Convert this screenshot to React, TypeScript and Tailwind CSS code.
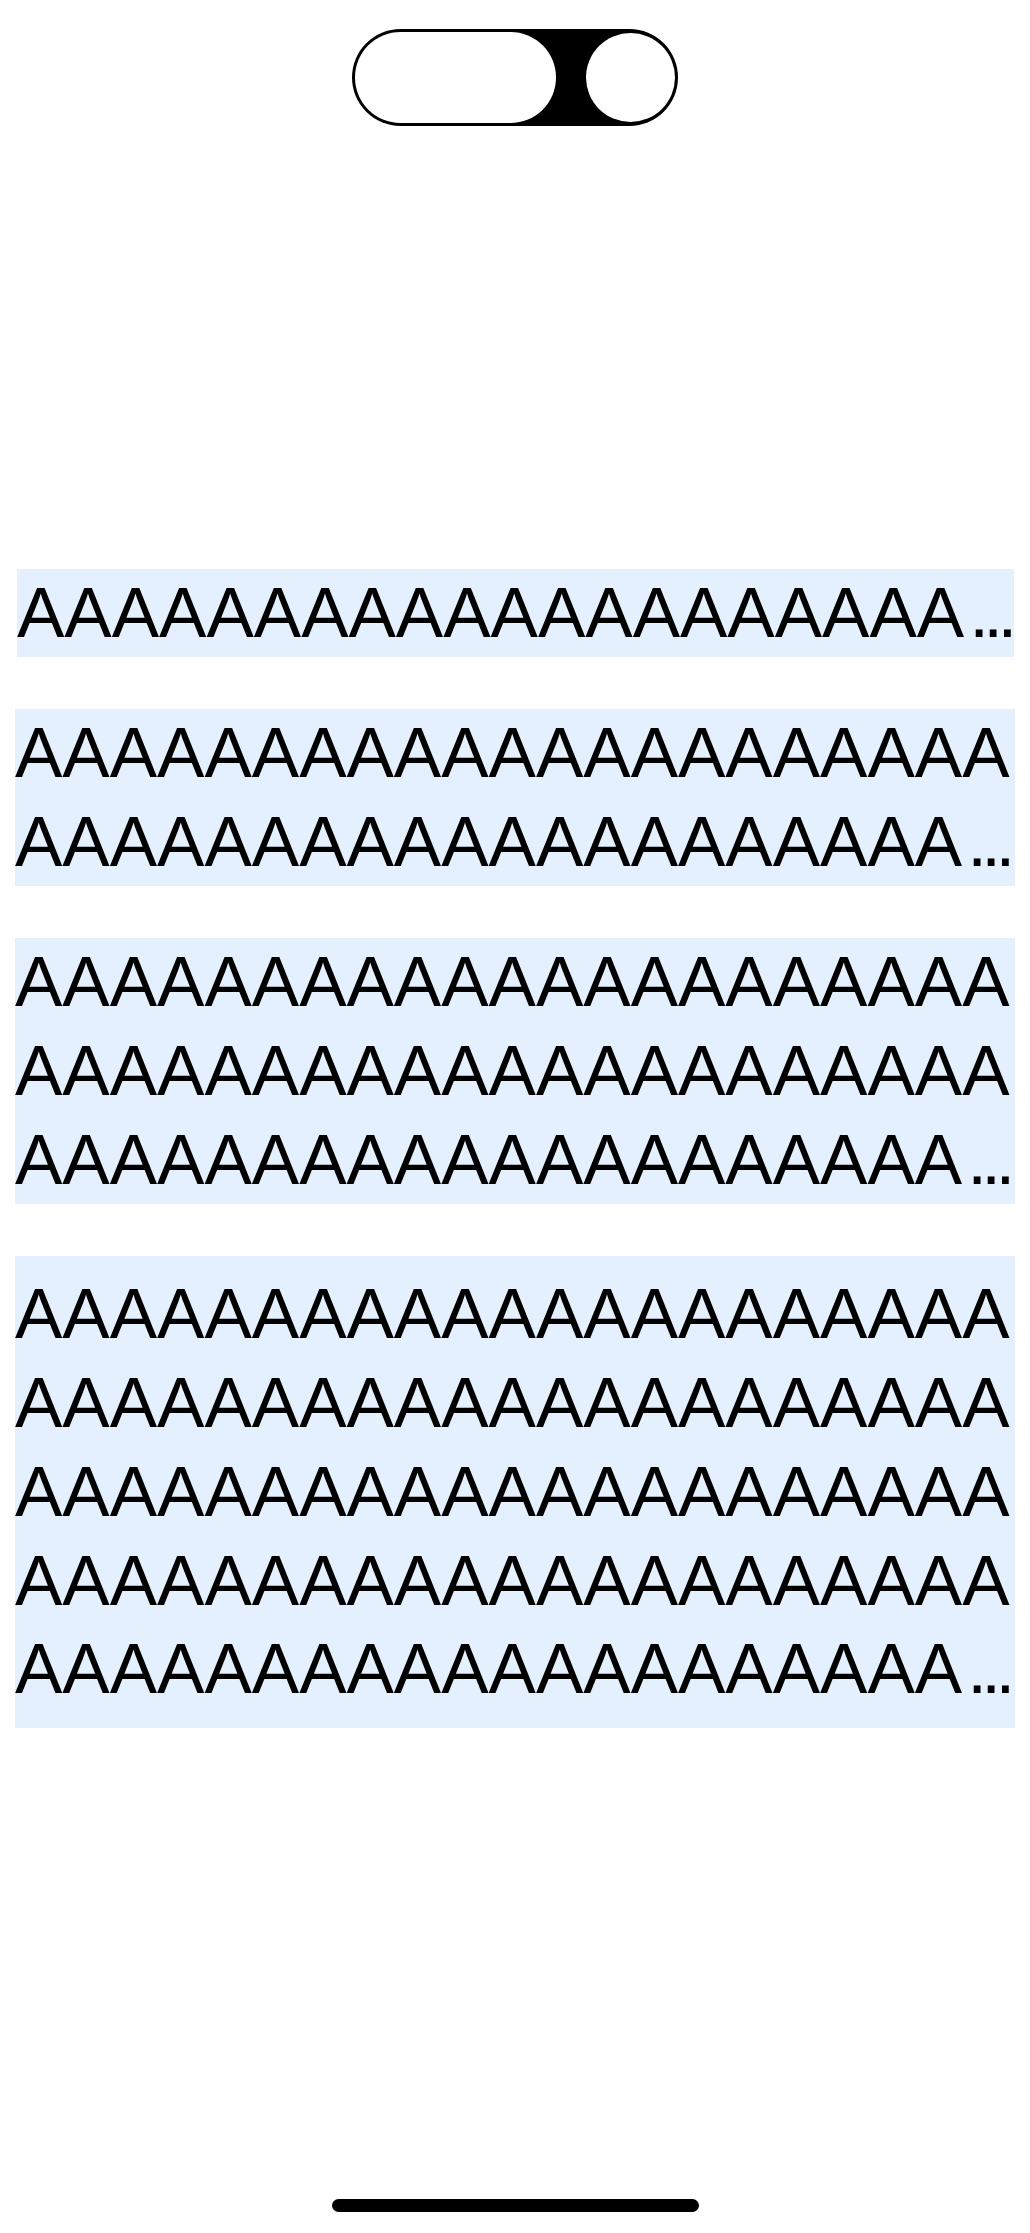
import React from "react";

const A = (n: number) => "A".repeat(n);

function Clamp({ lines, className }: { lines: number; className: string }) {
  return (
    <div className={className}>
      <p className="break-all text-black">
        {lines > 1 && (
          <>
            {A(21 * (lines - 1))}
            <br />
          </>
        )}
        {A(20)}
        <span className="ml-[5px] inline-block tracking-[-5.5px]">...</span>
      </p>
    </div>
  );
}

export default function App() {
  return (
    <div className="flex min-h-[2233px] w-[1030px] flex-col bg-white font-['Liberation_Sans',Arial,sans-serif]">
      <div className="flex justify-center pt-[29px]">
        <div className="flex h-[97px] w-[326px] items-center justify-between rounded-full bg-black p-[3px]">
          <div className="h-[91px] w-[201px] rounded-full bg-white" />
          <div className="h-[89px] w-[89px] rounded-full bg-white" />
        </div>
      </div>

      <div className="mt-[443px] flex flex-col gap-[52px] px-[15px] text-[71px]">
        <Clamp lines={1} className="ml-[2px] mr-[1px] bg-[#e4f0fe] leading-[88px]" />
        <Clamp lines={2} className="bg-[#e4f0fe] leading-[88.5px]" />
        <Clamp lines={3} className="bg-[#e4f0fe] leading-[88.8px]" />
        <Clamp lines={5} className="bg-[#e4f0fe] py-[14px] leading-[88.7px]" />
      </div>

      <div className="mt-auto flex justify-center pb-[21px]">
        <div className="h-[13px] w-[367px] rounded-full bg-black" />
      </div>
    </div>
  );
}
